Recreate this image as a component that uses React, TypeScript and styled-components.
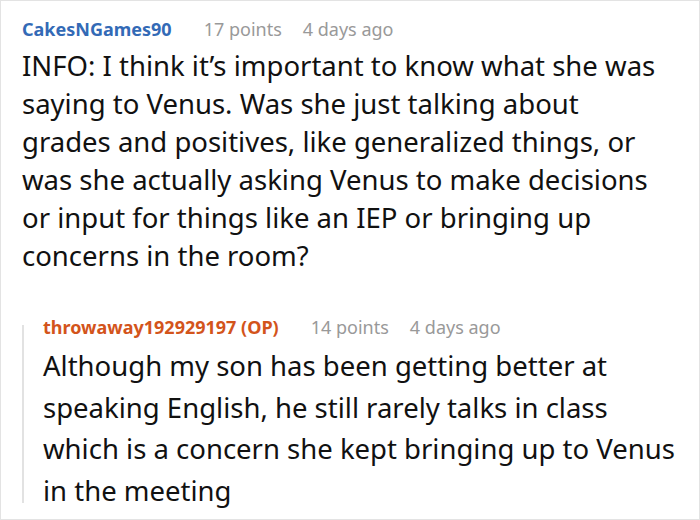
import styled, { createGlobalStyle } from "styled-components";

const GlobalStyle = createGlobalStyle`
  html, body {
    margin: 0;
    padding: 0;
    background: #ffffff;
  }
  body {
    font-family: "Noto Sans", "DejaVu Sans", sans-serif;
  }
`;

const Frame = styled.div`
  box-sizing: border-box;
  width: 700px;
  height: 520px;
  border: 1px solid #e3e3e3;
  padding: 11px 18px 0 21px;
  overflow: hidden;
`;

const Comment = styled.div`
  display: flex;
  flex-direction: column;
`;

const Meta = styled.div`
  display: flex;
  align-items: baseline;
  gap: 21px;
  height: 34px;
  line-height: 34px;
  font-size: 18px;
  white-space: nowrap;
`;

const Author = styled.span<{ $op?: boolean }>`
  font-weight: 700;
  color: ${({ $op }) => ($op ? "#d3541b" : "#336ab6")};
  margin-right: 11px;
`;

const Info = styled.span`
  color: #999999;
`;

const Body = styled.p<{ $lh?: number }>`
  margin: 1px 0 0;
  font-size: 27.5px;
  line-height: ${({ $lh = 38 }) => $lh}px;
  color: #111111;
  white-space: nowrap;
`;

const Reply = styled.div`
  position: relative;
  margin-top: 35px;
  padding-left: 21px;

  &::before {
    content: "";
    position: absolute;
    left: 0;
    top: 15px;
    bottom: 8px;
    width: 2px;
    background: #e2e2e2;
  }
`;

export default function App() {
  return (
    <>
      <GlobalStyle />
      <Frame>
        <Comment>
          <Meta>
            <Author>CakesNGames90</Author>
            <Info>17 points</Info>
            <Info>4 days ago</Info>
          </Meta>
          <Body>
            INFO: I think it’s important to know what she was
            <br />
            saying to Venus. Was she just talking about
            <br />
            grades and positives, like generalized things, or
            <br />
            was she actually asking Venus to make decisions
            <br />
            or input for things like an IEP or bringing up
            <br />
            concerns in the room?
          </Body>
          <Reply>
            <Meta>
              <Author $op>throwaway192929197 (OP)</Author>
              <Info>14 points</Info>
              <Info>4 days ago</Info>
            </Meta>
            <Body $lh={41.5}>
              Although my son has been getting better at
              <br />
              speaking English, he still rarely talks in class
              <br />
              which is a concern she kept bringing up to Venus
              <br />
              in the meeting
            </Body>
          </Reply>
        </Comment>
      </Frame>
    </>
  );
}
